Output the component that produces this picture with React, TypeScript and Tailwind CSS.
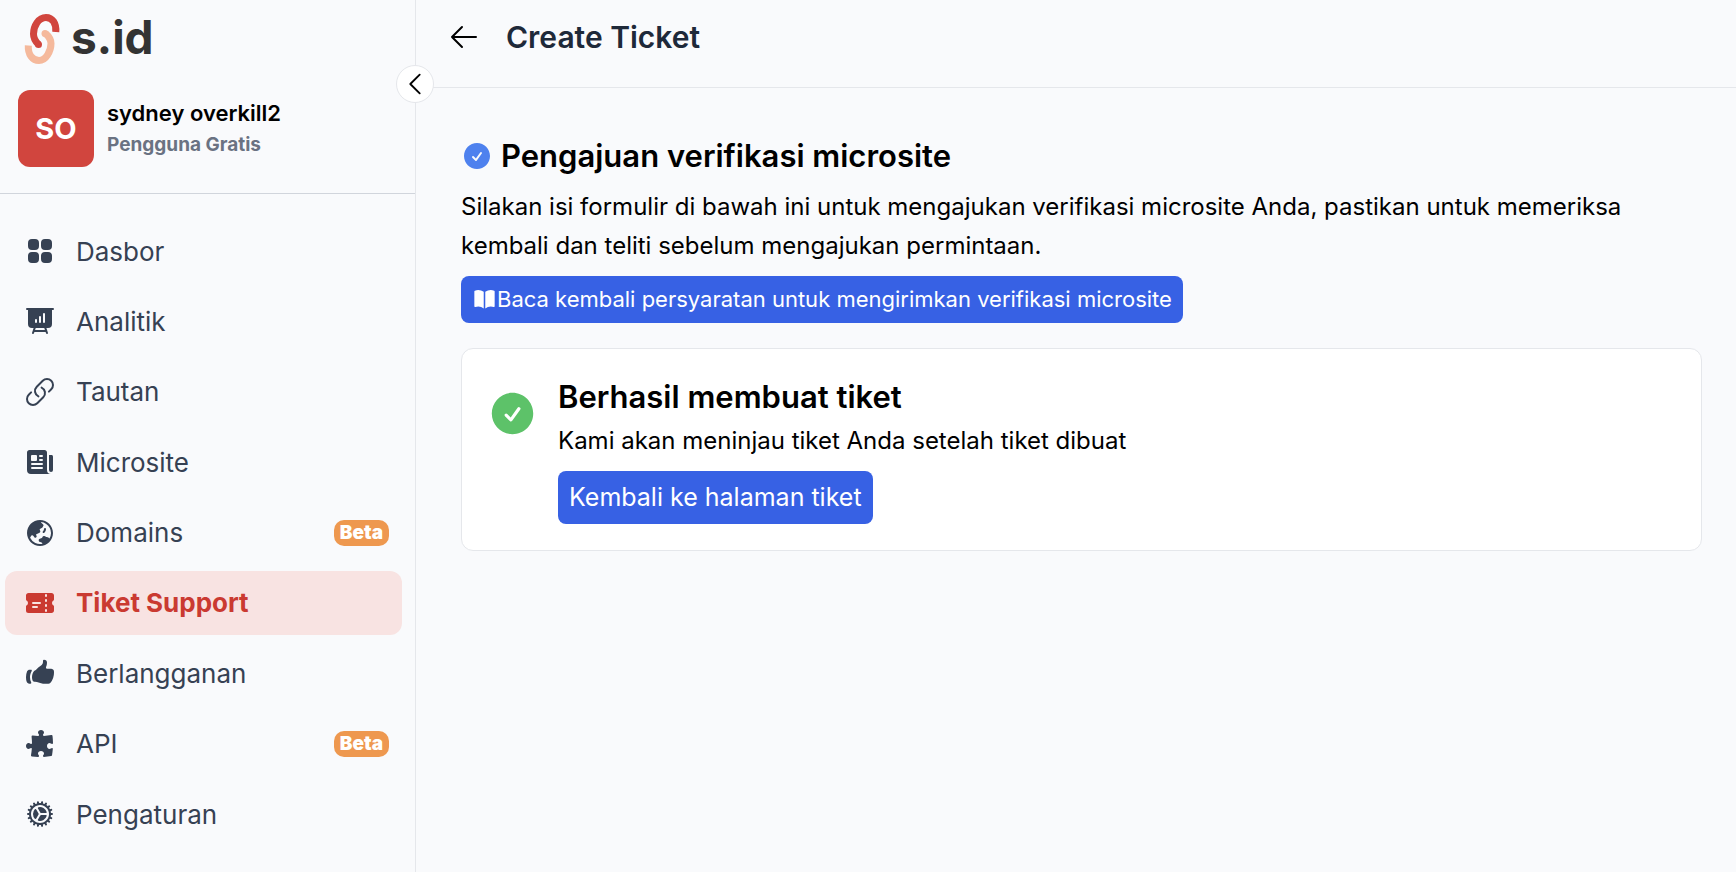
import React, { useState } from 'react';
import {
  HiBookOpen,
  HiCheckCircle,
  HiCog,
  HiGlobeAsiaAustralia,
  HiHandThumbUp,
  HiNewspaper,
  HiOutlineArrowLeft,
  HiOutlineChevronLeft,
  HiOutlineLink,
  HiPresentationChartBar,
  HiPuzzlePiece,
  HiSquares2X2,
  HiTicket,
} from 'react-icons/hi2';
import type { IconType } from 'react-icons';

interface MenuItem {
  label: string;
  icon: IconType;
  beta?: boolean;
}

const menu: MenuItem[] = [
  { label: 'Dasbor', icon: HiSquares2X2 },
  { label: 'Analitik', icon: HiPresentationChartBar },
  { label: 'Tautan', icon: HiOutlineLink },
  { label: 'Microsite', icon: HiNewspaper },
  { label: 'Domains', icon: HiGlobeAsiaAustralia, beta: true },
  { label: 'Tiket Support', icon: HiTicket },
  { label: 'Berlangganan', icon: HiHandThumbUp },
  { label: 'API', icon: HiPuzzlePiece, beta: true },
  { label: 'Pengaturan', icon: HiCog },
];

const Logo: React.FC = () => (
  <a href="#" className="flex items-center gap-[11px] pl-6 h-[50px]">
    <svg width="36" height="50" viewBox="0 0 36 50" fill="none" strokeWidth="7">
      <path
        d="M4.300 31.500C3.800 40.500 8.500 46.500 15 46.500C22 46.500 27 37 27 29.500C27 25 25 22.500 21.500 19.500"
        stroke="#f5b99c"
      />
      <circle cx="21" cy="19.500" r="3.500" fill="#f5b99c" />
      <path
        d="M31.800 18C32.500 9.500 28.500 3.500 22 3.500C14.500 3.500 9.500 12 9.500 20C9.500 24.500 11.500 27.500 14.500 30.500"
        stroke="#d1453e"
      />
      <circle cx="14.500" cy="30.500" r="3.500" fill="#d1453e" />
    </svg>
    <span className="pb-1 text-[46px] leading-[46px] font-bold text-[#333333]">s.id</span>
  </a>
);

interface SidebarProps {
  active: string;
  onSelect: (label: string) => void;
}

const Sidebar: React.FC<SidebarProps> = ({ active, onSelect }) => (
  <aside className="relative flex flex-col w-[416px] shrink-0 border-r border-gray-200">
    <div className="pt-[14px] pb-[26px] border-b border-gray-300">
      <Logo />
      <div className="flex items-center gap-[13px] mt-[26px] px-[18px]">
        <div className="flex items-center justify-center w-[76px] h-[77px] rounded-xl bg-[#d1453e] text-white text-[29px] font-bold">
          SO
        </div>
        <div>
          <p className="text-[22px] leading-8 font-semibold text-black">sydney overkill2</p>
          <p className="text-[19px] leading-8 font-bold text-gray-500">Pengguna Gratis</p>
        </div>
      </div>
    </div>

    <nav className="flex flex-col flex-1 justify-between pt-[25px] pb-[26px] pl-[5px] pr-[13px]">
      {menu.map(({ label, icon: Icon, beta }) => (
        <a
          key={label}
          href="#"
          onClick={() => onSelect(label)}
          className={`flex items-center h-16 pl-[19px] pr-[13px] rounded-xl text-[26px] ${
            label === active ? 'bg-[#f8e3e2] text-[#ca3a31] font-bold' : 'text-gray-700'
          }`}
        >
          <Icon size={32} className="mr-5" />
          {label}
          {beta && (
            <span className="ml-auto px-[6px] rounded-[10px] bg-[#ee984f] text-white text-[19px] leading-[26px] font-black">
              Beta
            </span>
          )}
        </a>
      ))}
    </nav>

    <button
      type="button"
      aria-label="Tutup menu"
      className="absolute top-[65px] -right-[19px] flex items-center justify-center size-[38px] rounded-full border border-gray-200 bg-white text-black"
    >
      <HiOutlineChevronLeft size={30} />
    </button>
  </aside>
);

const App: React.FC = () => {
  const [active, setActive] = useState('Tiket Support');

  return (
    <div className="flex min-h-screen bg-[#f9fafc] font-['Inter','Liberation_Sans',sans-serif] text-black">
      <Sidebar active={active} onSelect={setActive} />

      <div className="flex-1 min-w-0">
        <header className="flex items-center gap-[26px] h-[88px] pl-8 pb-[13px] border-b border-gray-200">
          <button type="button" aria-label="Kembali">
            <HiOutlineArrowLeft size={32} />
          </button>
          <h1 className="text-[30px] font-semibold text-gray-800">Create Ticket</h1>
        </header>

        <main className="pl-[45px] pr-[34px] pt-[47px]">
          <div className="flex items-center gap-2">
            <HiCheckCircle size={32} className="text-[#4e81ee]" />
            <h2 className="text-[31px] leading-[42px] font-semibold">Pengajuan verifikasi microsite</h2>
          </div>
          <p className="mt-[10px] text-[24px] leading-[39px]">
            Silakan isi formulir di bawah ini untuk mengajukan verifikasi microsite Anda, pastikan untuk memeriksa
            kembali dan teliti sebelum mengajukan permintaan.
          </p>
          <a
            href="#"
            className="inline-flex items-center h-[47px] mt-[11px] px-[11px] rounded-lg bg-[#3761e4] text-white text-[22px]"
          >
            <HiBookOpen size={25} />
            Baca kembali persyaratan untuk mengirimkan verifikasi microsite
          </a>

          <section className="flex gap-5 mt-[25px] pt-6 pb-[26px] pl-[25px] pr-6 rounded-xl border border-gray-200 bg-white">
            <HiCheckCircle size={51} className="mt-[15px] shrink-0 text-[#5dc269]" />
            <div>
              <h3 className="text-[31px] leading-[48px] font-semibold">Berhasil membuat tiket</h3>
              <p className="text-[24px] leading-[39px]">Kami akan meninjau tiket Anda setelah tiket dibuat</p>
              <button
                type="button"
                className="h-[53px] mt-[11px] px-[11px] rounded-lg bg-[#3761e4] text-white text-[25px]"
              >
                Kembali ke halaman tiket
              </button>
            </div>
          </section>
        </main>
      </div>
    </div>
  );
};

export default App;
